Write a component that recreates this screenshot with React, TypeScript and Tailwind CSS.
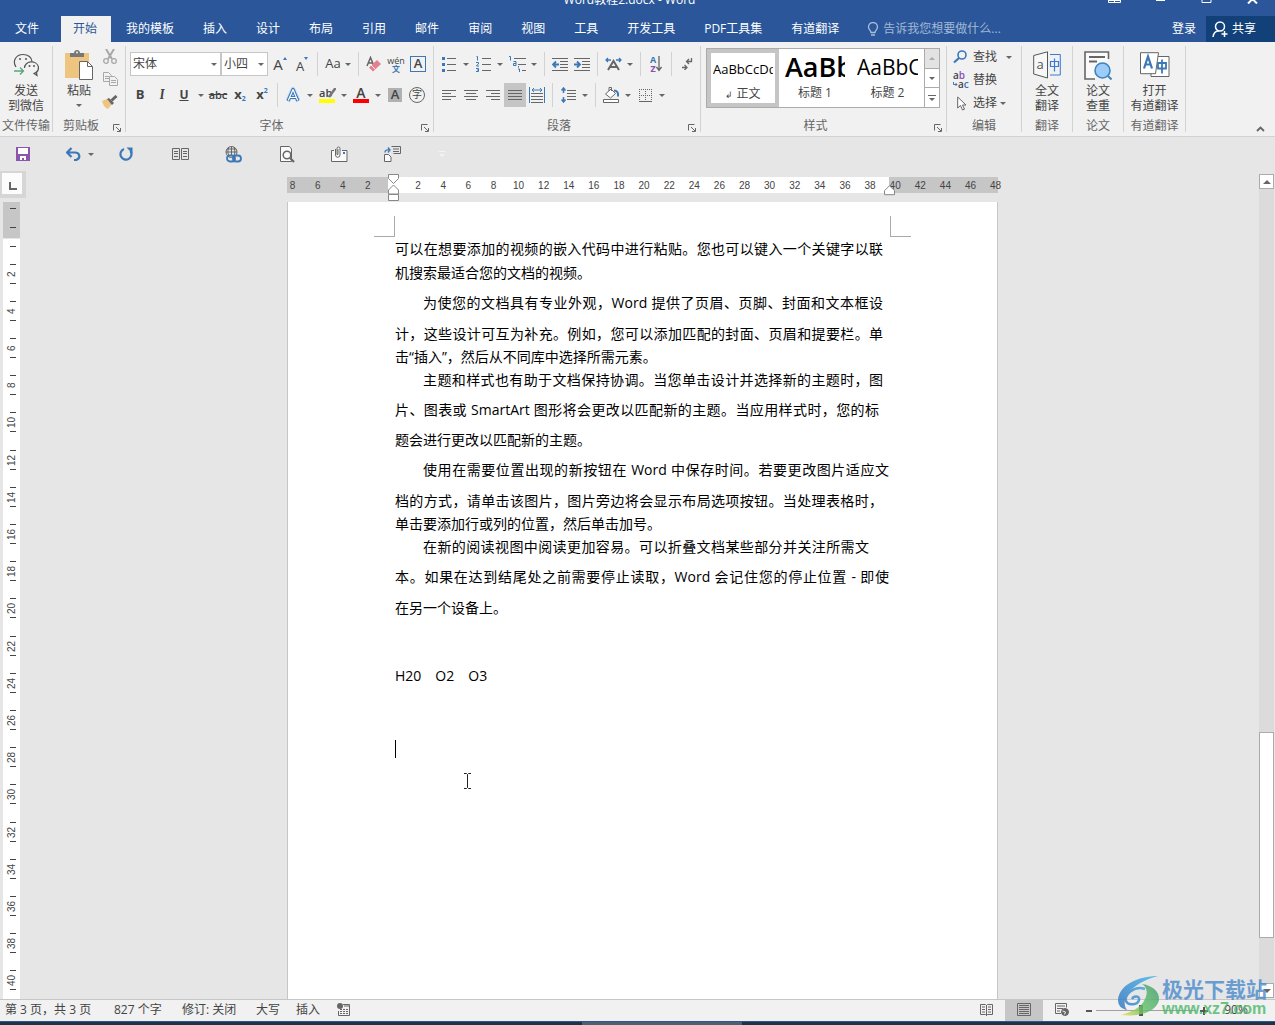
import type { ReactNode } from "react";
import { clsx } from "clsx";

const tabs = [
  "开始", "我的模板", "插入", "设计", "布局", "引用", "邮件", "审阅", "视图", "工具", "开发工具", "PDF工具集", "有道翻译",
];

const hRuler = [8, 6, 4, 2, 0, 2, 4, 6, 8, 10, 12, 14, 16, 18, 20, 22, 24, 26, 28, 30, 32, 34, 36, 38, 40, 42, 44, 46, 48];
const vRuler = [2, 4, 6, 8, 10, 12, 14, 16, 18, 20, 22, 24, 26, 28, 30, 32, 34, 36, 38, 40];

type Line = { text: string; space: string; indent?: boolean; end?: string };

// lines with an `end` are justified up to that right padding
const paragraphs: Line[][] = [
  [
    { text: "可以在想要添加的视频的嵌入代码中进行粘贴。您也可以键入一个关键字以联", space: "pt-0.5", end: "pr-1.5" },
    { text: "机搜索最适合您的文档的视频。", space: "pt-0.5" },
  ],
  [
    { text: "为使您的文档具有专业外观，Word 提供了页眉、页脚、封面和文本框设", space: "pt-2", indent: true, end: "pr-1.5" },
    { text: "计，这些设计可互为补充。例如，您可以添加匹配的封面、页眉和提要栏。单", space: "pt-[9px]", end: "pr-1.5" },
    { text: "击“插入”，然后从不同库中选择所需元素。", space: "pt-px" },
  ],
  [
    { text: "主题和样式也有助于文档保持协调。当您单击设计并选择新的主题时，图", space: "pt-px", indent: true, end: "pr-1.5" },
    { text: "片、图表或 SmartArt 图形将会更改以匹配新的主题。当应用样式时，您的标", space: "pt-2", end: "pr-2.5" },
    { text: "题会进行更改以匹配新的主题。", space: "pt-2" },
  ],
  [
    { text: "使用在需要位置出现的新按钮在 Word 中保存时间。若要更改图片适应文", space: "pt-2", indent: true, end: "pr-0" },
    { text: "档的方式，请单击该图片，图片旁边将会显示布局选项按钮。当处理表格时，", space: "pt-[9px]", end: "pr-1.5" },
    { text: "单击要添加行或列的位置，然后单击加号。", space: "pt-px" },
  ],
  [
    { text: "在新的阅读视图中阅读更加容易。可以折叠文档某些部分并关注所需文", space: "pt-px", indent: true, end: "pr-5" },
    { text: "本。如果在达到结尾处之前需要停止读取，Word 会记住您的停止位置 - 即使", space: "pt-2", end: "pr-0" },
    { text: "在另一个设备上。", space: "pt-[9px]" },
  ],
];

function Icon({ w, h, children }: { w: number; h: number; children: ReactNode }) {
  return (
    <svg width={w} height={h} viewBox={`0 0 ${w} ${h}`} fill="none" stroke="#666" aria-hidden="true" className="shrink-0">
      {children}
    </svg>
  );
}

function Caret({ color = "#666" }: { color?: string }) {
  return (
    <Icon w={6} h={3}>
      <path d="M0 0h6L3 3z" fill={color} stroke="none" />
    </Icon>
  );
}

function Tool({ label, active, children }: { label: string; active?: boolean; children: ReactNode }) {
  return (
    <button
      type="button"
      aria-label={label}
      className={clsx("flex h-6 w-[22px] shrink-0 items-center justify-center", active && "bg-[#c5c5c5]")}
    >
      {children}
    </button>
  );
}

function More({ label }: { label: string }) {
  return (
    <button type="button" aria-label={label} className="flex h-6 w-3 shrink-0 items-center justify-center">
      <Caret />
    </button>
  );
}

function Sep() {
  return <span className="mx-1 h-6 w-px shrink-0 bg-[#d2d2d2]" />;
}

function Group({ label, width, launcher, children }: { label: string; width: string; launcher?: boolean; children: ReactNode }) {
  return (
    <section className={clsx("my-1 flex shrink-0 flex-col border-r border-[#d2d2d2]", width)}>
      <div className="flex-1">{children}</div>
      <div className="flex h-3 items-center leading-3 text-[#666]">
        <span className="flex-1 text-center whitespace-nowrap">{label}</span>
        {launcher && (
          <button type="button" aria-label={`${label}设置`} className="mt-1 flex w-4 justify-center">
            <Icon w={8} h={8}>
              <path d="M.5 6.500V.5h6M3 3l4 4M7.500 4v3.500H4" />
            </Icon>
          </button>
        )}
      </div>
    </section>
  );
}

function BigButton({ icon, lines }: { icon: ReactNode; lines: string[] }) {
  return (
    <button type="button" className="flex w-full flex-col items-center pt-1 leading-[15px] whitespace-nowrap">
      <span className="flex h-[30px] items-center">{icon}</span>
      <span className="mt-[3px]">{lines[0]}</span>
      <span>{lines[1]}</span>
    </button>
  );
}

function TitleBar() {
  return (
    <div className="flex h-4 items-start overflow-hidden text-white">
      <div className="flex-1" />
      <div className="-mt-2 leading-4">Word教程2.docx - Word</div>
      <div className="flex flex-1 justify-end gap-[33px] pr-4">
        <button type="button" aria-label="功能区显示选项">
          <Icon w={13} h={4}>
            <path d="M.5 0v2.500h12V0M6.500 0v3M0 .5h13" stroke="#fff" />
          </Icon>
        </button>
        <button type="button" aria-label="最小化">
          <Icon w={13} h={4}>
            <path d="M2 .5h9" stroke="#fff" />
          </Icon>
        </button>
        <button type="button" aria-label="最大化">
          <Icon w={13} h={4}>
            <path d="M2 0v2.500h9V0" stroke="#fff" />
          </Icon>
        </button>
        <button type="button" aria-label="关闭">
          <Icon w={13} h={4}>
            <path d="M6.500-1 2 3.500M6.500-1 11 3.500" stroke="#fff" strokeWidth="2" />
          </Icon>
        </button>
      </div>
    </div>
  );
}

function TabBar() {
  return (
    <nav className="flex h-[26px] items-stretch text-white">
      <button type="button" className="mr-2 ml-[3px] pr-3.5 pl-3">文件</button>
      <div className="flex gap-[3px]">
        {tabs.map((tab) => (
          <button
            key={tab}
            type="button"
            className={clsx("pr-3.5 pl-3 whitespace-nowrap", tab === "开始" && "bg-[#f1f1f1] text-[#2b579a]")}
          >
            {tab}
          </button>
        ))}
      </div>
      <label className="ml-3.5 flex flex-1 items-center gap-1">
        <Icon w={12} h={14}>
          <path d="M4 10.500C4 8.500 1.500 7.500 1.500 5a4.500 4.500 0 0 1 9 0c0 2.500-2.500 3.500-2.500 5.500zM4 13h4" stroke="#a9bcd8" strokeWidth="1.300" />
        </Icon>
        <input
          type="text"
          aria-label="告诉我您想要做什么"
          placeholder="告诉我您想要做什么..."
          className="w-32 bg-transparent outline-none placeholder:text-[#a3b8d6]"
        />
      </label>
      <button type="button" className="px-2.5">登录</button>
      <button type="button" className="flex w-[69px] items-center gap-1 bg-[#124078] pl-1.5">
        <Icon w={16} h={17}>
          <circle cx="8" cy="5.500" r="4.500" stroke="#fff" strokeWidth="1.500" />
          <path d="M1 16c.5-4 2.500-6 6-6.200M12.500 10v6M9.500 13h6" stroke="#fff" strokeWidth="1.500" />
        </Icon>
        共享
      </button>
    </nav>
  );
}

function ClipboardGroup() {
  return (
    <Group label="剪贴板" width="w-[73px]" launcher>
      <div className="flex pl-1.5">
        <button type="button" className="flex w-10 flex-col items-center pt-1 leading-[15px]">
          <Icon w={28} h={30}>
            <path d="M0 3h24v25H0z" fill="#eec57e" stroke="none" />
            <path d="M5 3h4c0-4 6-4 6 0h4v4H5z" fill="#777" stroke="none" />
            <circle cx="12" cy="2.500" r="1" fill="#f1f1f1" stroke="none" />
            <path d="M14.500 11.500h8l5 5v13h-13z" fill="#fff" />
            <path d="M22.500 11.500v5h5" />
          </Icon>
          <span className="mt-[3px]">粘贴</span>
          <span className="mt-1.5"><Caret /></span>
        </button>
        <div className="flex flex-col gap-[3px] pl-0.5">
          <button type="button" aria-label="剪切" className="flex h-5 w-[18px] items-center justify-center">
            <Icon w={14} h={15}>
              <path d="M3 0l6 10M11 0L5 10" stroke="#a8a8a8" strokeWidth="2" />
              <circle cx="3" cy="12" r="2.300" stroke="#a8a8a8" strokeWidth="1.300" />
              <circle cx="11" cy="12" r="2.300" stroke="#a8a8a8" strokeWidth="1.300" />
            </Icon>
          </button>
          <button type="button" aria-label="复制" className="flex h-5 w-[18px] items-center justify-center">
            <Icon w={15} h={14}>
              <path d="M.5.500h5l3 3v6h-8zM2 4.500h4M2 6.500h4" stroke="#a8a8a8" />
              <path d="M6.500 4.500h5l3 3v6h-8z" fill="#f1f1f1" stroke="#a8a8a8" />
              <path d="M8 8.500h5M8 10.500h5" stroke="#a8a8a8" />
            </Icon>
          </button>
          <button type="button" aria-label="格式刷" className="flex h-5 w-[18px] items-center justify-center">
            <Icon w={16} h={14}>
              <path d="M0 6l5-2 5 5-4 5c-3-1-5-4-6-8z" fill="#eec57e" stroke="none" />
              <path d="M5 4l2-1 5 5-2 2z" fill="#666" stroke="none" />
              <path d="M9.500 5.500L14.500 1" strokeWidth="3" />
            </Icon>
          </button>
        </div>
      </div>
    </Group>
  );
}

function FontGroup() {
  return (
    <Group label="字体" width="w-[308px]" launcher>
      <div className="flex flex-col gap-[7px] pt-1.5">
        <div className="flex items-center pl-1">
          <div className="grid w-[91px] shrink-0 items-center">
            <select aria-label="字体" className="col-start-1 row-start-1 h-6 appearance-none border border-[#c6c6c6] bg-white pl-0.5">
              <option>宋体</option>
            </select>
            <span className="pointer-events-none col-start-1 row-start-1 mr-1 justify-self-end"><Caret /></span>
          </div>
          <div className="mr-px grid w-[47px] shrink-0 items-center">
            <select aria-label="字号" className="col-start-1 row-start-1 h-6 appearance-none border border-[#c6c6c6] bg-white pl-0.5">
              <option>小四</option>
            </select>
            <span className="pointer-events-none col-start-1 row-start-1 mr-1 justify-self-end"><Caret /></span>
          </div>
          <Tool label="增大字号">
            <span className="text-[15px] leading-none">A</span>
            <span className="mb-3"><Icon w={4} h={3}><path d="M0 3h4L2 0z" fill="#3b78b5" stroke="none" /></Icon></span>
          </Tool>
          <Tool label="减小字号">
            <span className="mt-1 text-[13px] leading-none">A</span>
            <span className="mb-3"><Icon w={4} h={3}><path d="M0 0h4L2 3z" fill="#3b78b5" stroke="none" /></Icon></span>
          </Tool>
          <Sep />
          <button type="button" aria-label="更改大小写" className="flex h-6 w-8 items-center justify-center gap-1 text-[13px]">
            Aa <Caret />
          </button>
          <Sep />
          <Tool label="清除格式">
            <Icon w={16} h={16}>
              <path d="M1 10L4.500 1.500L8 10M2.500 7h4" strokeWidth="1.500" />
              <path d="M3 11.500L11 4l4 4-8 7.500z" fill="#e2808c" stroke="none" />
              <path d="M5 9l4.500 4.500" stroke="#f1f1f1" />
            </Icon>
          </Tool>
          <Tool label="拼音指南">
            <span className="flex flex-col items-center leading-none">
              <span className="text-[9px]">wén</span>
              <span className="text-[8px] font-bold text-[#3b78b5]">文</span>
            </span>
          </Tool>
          <Tool label="字符边框">
            <span className="flex h-4 w-4 items-center justify-center border border-[#3b78b5] text-[13px] font-semibold">A</span>
          </Tool>
        </div>
        <div className="flex items-center pl-[3px]">
          <Tool label="加粗"><span className="text-[13px] font-bold">B</span></Tool>
          <Tool label="倾斜"><span className="font-serif text-[13px] font-bold italic">I</span></Tool>
          <Tool label="下划线"><span className="text-[12px] font-bold underline">U</span></Tool>
          <More label="下划线样式" />
          <Tool label="删除线"><span className="text-[11px] font-semibold line-through">abc</span></Tool>
          <Tool label="下标">
            <span className="text-[13px] font-bold">x</span>
            <span className="mt-2 text-[7px] font-bold text-[#3b78b5]">2</span>
          </Tool>
          <Tool label="上标">
            <span className="text-[13px] font-bold">x</span>
            <span className="mb-2 text-[7px] font-bold text-[#3b78b5]">2</span>
          </Tool>
          <Sep />
          <Tool label="文本效果">
            <Icon w={16} h={16}>
              <path d="M3 13.500L8 2.500l5 11M5 10h6" stroke="#c3dcf3" strokeWidth="5" strokeLinejoin="round" />
              <path d="M3 14L8 2.500 13 14M5 10.500h6" stroke="#3b78b5" strokeWidth="3.200" strokeLinejoin="round" />
              <path d="M3.300 13.500L8 2.500l4.700 11M5 10.500h6" stroke="#fff" strokeWidth="1.200" strokeLinejoin="round" />
            </Icon>
          </Tool>
          <More label="文本效果选项" />
          <Tool label="突出显示">
            <span className="flex w-4 flex-col">
              <span className="flex h-3 items-center text-[11px] font-semibold">
                ab
                <span className="-ml-1"><Icon w={8} h={11}><path d="M7.500 0L1 9" strokeWidth="2.500" stroke="#777" /></Icon></span>
              </span>
              <span className="h-1 w-4 bg-[#ffff00]" />
            </span>
          </Tool>
          <More label="突出显示颜色" />
          <Tool label="字体颜色">
            <span className="flex w-4 flex-col items-center">
              <span className="h-3 text-[14px] leading-3 font-semibold">A</span>
              <span className="h-1 w-4 bg-[#ff0000]" />
            </span>
          </Tool>
          <More label="更多颜色" />
          <Tool label="字符底纹">
            <span className="flex h-3.5 w-3.5 items-center justify-center bg-[#b1b1b1] text-[13px] font-semibold">A</span>
          </Tool>
          <Tool label="带圈字符">
            <span className="flex h-4 w-4 items-center justify-center rounded-full border border-[#666] text-[10px]">字</span>
          </Tool>
        </div>
      </div>
    </Group>
  );
}

function ParagraphGroup() {
  return (
    <Group label="段落" width="w-[267px]" launcher>
      <div className="flex flex-col gap-[7px] pt-1.5">
        <div className="flex items-center pl-1">
          <Tool label="项目符号">
            <Icon w={14} h={16}>
              <path d="M5 2.500h9M5 8.500h9M5 14.500h9" />
              <path d="M0 1h3v3H0zM0 7h3v3H0zM0 13h3v3H0z" fill="#3b78b5" stroke="none" />
            </Icon>
          </Tool>
          <More label="项目符号库" />
          <Tool label="编号">
            <Icon w={15} h={16}>
              <path d="M6 2.500h9M6 8.500h9M6 14.500h9" />
              <path d="M.5.500h1v4M0 6.500h2.500v1.500L.5 9.500v.5h2.500M0 12.500h2.500v3H0M1 14h1.500" stroke="#3b78b5" />
            </Icon>
          </Tool>
          <More label="编号库" />
          <Tool label="多级列表">
            <Icon w={17} h={16}>
              <path d="M5 2.500h12M9 8.500h8M13 14.500h4" />
              <path d="M0 .5h1.500v4M4.500 5.500H7V9.500H4.500V7.500H7M9.500 10v1.500M9 13h1.500v3" stroke="#3b78b5" />
            </Icon>
          </Tool>
          <More label="列表库" />
          <Sep />
          <Tool label="减少缩进量">
            <Icon w={16} h={13}>
              <path d="M0 .5h16M8 3.500h8M8 6.500h8M8 9.500h8M0 12.500h16" />
              <path d="M1 6.500h6M4 3.500l-3 3 3 3" stroke="#3b78b5" strokeWidth="1.800" />
            </Icon>
          </Tool>
          <Tool label="增加缩进量">
            <Icon w={16} h={13}>
              <path d="M0 .5h16M8 3.500h8M8 6.500h8M8 9.500h8M0 12.500h16" />
              <path d="M0 6.500h6M3 3.500l3 3-3 3" stroke="#3b78b5" strokeWidth="1.800" />
            </Icon>
          </Tool>
          <Sep />
          <Tool label="中文版式">
            <Icon w={17} h={14}>
              <path d="M3 13l5.500-9L14 13M5.500 10h6" strokeWidth="2" />
              <path d="M1 3h5M3 1L1 3l2 2M16 3h-5M14 1l2 2-2 2" stroke="#3b78b5" strokeWidth="1.300" />
            </Icon>
          </Tool>
          <More label="中文版式选项" />
          <Sep />
          <Tool label="排序">
            <span className="flex flex-col text-[9px] leading-[9px] font-bold">
              <span className="text-[#3b78b5]">A</span>
              <span className="text-[#8c4fb0]">Z</span>
            </span>
            <Icon w={6} h={16}><path d="M3 0v14M.5 11L3 14.500 5.500 11" strokeWidth="1.300" /></Icon>
          </Tool>
          <Sep />
          <Tool label="显示编辑标记">
            <Icon w={11} h={12}>
              <path d="M9.500 0v3.500H5M7 1L4.500 3.500 7 6M0 9.500h4.500M2.500 7L5 9.500 2.500 12" strokeWidth="1.300" />
            </Icon>
          </Tool>
        </div>
        <div className="flex items-center pl-1">
          <Tool label="左对齐"><Icon w={14} h={10}><path d="M0 .5h14M0 3.500h9M0 6.500h14M0 9.500h9" /></Icon></Tool>
          <Tool label="居中"><Icon w={14} h={10}><path d="M0 .5h14M2 3.500h10M0 6.500h14M2 9.500h10" /></Icon></Tool>
          <Tool label="右对齐"><Icon w={14} h={10}><path d="M0 .5h14M5 3.500h9M0 6.500h14M5 9.500h9" /></Icon></Tool>
          <Tool label="两端对齐" active><Icon w={14} h={10}><path d="M0 .5h14M0 3.500h14M0 6.500h14M0 9.500h14" /></Icon></Tool>
          <Tool label="分散对齐">
            <Icon w={16} h={16}>
              <path d="M2 6.500h12M2 9.500h12M2 12.500h12M2 15.500h12" />
              <path d="M.5 0v16M15.500 0v16M3 3h10M5 1L3 3l2 2M11 1l2 2-2 2" stroke="#3b78b5" />
            </Icon>
          </Tool>
          <Sep />
          <Tool label="行距">
            <Icon w={15} h={16}>
              <path d="M6 3.500h9M6 6.500h9M6 9.500h9M6 12.500h9" />
              <path d="M2.500 1v5M2.500 10v5M.5 3.500l2-2.500 2 2.500M.5 12.500l2 2.500 2-2.500" stroke="#3b78b5" strokeWidth="1.500" />
            </Icon>
          </Tool>
          <More label="行距选项" />
          <Sep />
          <Tool label="底纹">
            <Icon w={16} h={16}>
              <path d="M2.500 7L8 2l4.500 4.500L7.500 11zM6 4V.5h2.500V4" fill="#fff" />
              <path d="M11 3.500c3 0 4.500 2 4 6" stroke="#3b78b5" strokeWidth="2" />
              <path d="M.5 12.500h15v3H.5z" fill="#fff" />
            </Icon>
          </Tool>
          <More label="底纹颜色" />
          <Tool label="边框">
            <Icon w={13} h={13}>
              <path d="M0 .5h13M0 6.500h13M.5 0v13M6.500 0v13M12.500 0v13" strokeDasharray="1 1" />
              <path d="M0 12.500h13" />
            </Icon>
          </Tool>
          <More label="边框选项" />
        </div>
      </div>
    </Group>
  );
}

function StyleGroup() {
  return (
    <Group label="样式" width="w-[246px]" launcher>
      <div className="mt-0.5 mr-1.5 ml-[5px] flex h-[60px] border border-[#ababab] bg-white text-black">
        <button type="button" className="flex w-[72px] flex-col border-4 border-[#c5c5c5] px-0.5">
          <span className="flex h-[34px] w-full items-center overflow-hidden text-[13px] whitespace-nowrap">AaBbCcDd</span>
          <span className="w-full text-center leading-[14px] text-[#444]"><span className="text-[9px]">↲</span> 正文</span>
        </button>
        <button type="button" className="flex w-[72px] flex-col px-1.5">
          <span className="flex h-9 w-full items-center overflow-hidden text-[27px] font-semibold whitespace-nowrap">AaBb</span>
          <span className="w-full text-center leading-4 text-[#444]">标题 1</span>
        </button>
        <button type="button" className="flex w-[73px] flex-col px-1.5">
          <span className="flex h-9 w-full items-center overflow-hidden text-[21px] whitespace-nowrap">AaBbC</span>
          <span className="w-full text-center leading-4 text-[#444]">标题 2</span>
        </button>
        <div className="flex flex-1 flex-col border-l border-[#ababab]">
          <button type="button" aria-label="上一行" className="flex flex-1 items-center justify-center border-b border-[#ababab] bg-[#e3e3e3]">
            <Icon w={6} h={3}><path d="M0 3h6L3 0z" fill="#ababab" stroke="none" /></Icon>
          </button>
          <button type="button" aria-label="下一行" className="flex flex-1 items-center justify-center border-b border-[#ababab]"><Caret /></button>
          <button type="button" aria-label="其他样式" className="flex flex-1 items-center justify-center">
            <Icon w={8} h={6}><path d="M0 .5h8" /><path d="M1 3h6L4 6z" fill="#666" stroke="none" /></Icon>
          </button>
        </div>
      </div>
    </Group>
  );
}

function EditGroup() {
  return (
    <Group label="编辑" width="w-[75px]">
      <div className="flex flex-col gap-[3px] pt-px pl-1.5">
        <button type="button" className="flex h-5 items-center">
          <span className="flex w-5"><Icon w={14} h={14}>
            <circle cx="9" cy="5" r="4" stroke="#3b78b5" strokeWidth="1.600" />
            <path d="M6 8L1 12.500" stroke="#3b78b5" strokeWidth="2.200" />
          </Icon></span>
          查找<span className="ml-[9px]"><Caret /></span>
        </button>
        <button type="button" className="flex h-5 items-center">
          <span className="flex w-5 flex-col text-left text-[10px] leading-[9px] font-semibold">
            <span>a<span className="text-[#8c4fb0]">b</span></span>
            <span className="flex items-center">
              <Icon w={5} h={5}><path d="M.5 0v2.500H4M2.500 1L4 2.500 2.500 4" stroke="#3b78b5" /></Icon>
              a<span className="text-[#3b78b5]">c</span>
            </span>
          </span>
          替换
        </button>
        <button type="button" className="flex h-5 items-center">
          <span className="flex w-5 pl-1"><Icon w={10} h={15}>
            <path d="M.7 1v11l2.800-2.500L5.500 14l2-.8L5.500 9H9z" fill="#fff" />
          </Icon></span>
          选择<span className="ml-[3px]"><Caret /></span>
        </button>
      </div>
    </Group>
  );
}

function Ribbon() {
  return (
    <div className="flex h-[95px] border-b border-[#d2d2d2] bg-[#f1f1f1]">
      <Group label="文件传输" width="w-[53px]">
        <BigButton
          lines={["发送", "到微信"]}
          icon={
            <Icon w={26} h={24}>
              <path d="M3 14C-1 8 3 1.500 10 1.500c5 0 9 3 9 7" stroke="#555" strokeWidth="1.200" />
              <path d="M11.500 15a7 6 0 1 1 9.500 5.500l3 2-.5-3c1.500-1.200 2-3 1.800-5" stroke="#555" strokeWidth="1.200" />
              <circle cx="7" cy="6" r="1" fill="#555" stroke="none" />
              <circle cx="13" cy="6" r="1" fill="#555" stroke="none" />
              <circle cx="16.500" cy="13" r="1" fill="#555" stroke="none" />
              <circle cx="21" cy="13" r="1" fill="#555" stroke="none" />
              <path d="M1 18h9M7 14.500l3.500 3.500L7 21.500" stroke="#54a878" strokeWidth="1.300" />
            </Icon>
          }
        />
      </Group>
      <ClipboardGroup />
      <FontGroup />
      <ParagraphGroup />
      <StyleGroup />
      <EditGroup />
      <Group label="翻译" width="w-[51px]">
        <BigButton
          lines={["全文", "翻译"]}
          icon={
            <Icon w={28} h={28}>
              <path d="M14.500.800L.7 4.500v18.500l13.800 4z" fill="#f7f7f7" stroke="#555" />
              <text x="3.500" y="18" fontSize="13" fill="#555" stroke="none">a</text>
              <path d="M17 3.500h10.300v20.500H17" stroke="#3c78d8" />
              <path d="M17.500 10.500h8v5h-8zM21.500 7.500v13" stroke="#3c78d8" strokeWidth="1.200" />
            </Icon>
          }
        />
      </Group>
      <Group label="论文" width="w-[51px]">
        <BigButton
          lines={["论文", "查重"]}
          icon={
            <Icon w={28} h={29}>
              <path d="M24.500 8V1H1v27h10" fill="#fafafa" stroke="#666" strokeWidth="1.600" />
              <path d="M5 6h16M5 10.500h8" strokeWidth="1.800" />
              <circle cx="18.500" cy="19.500" r="7.500" fill="#9dccfa" stroke="#3b85bd" strokeWidth="1.600" />
              <path d="M24 25l3.500 3.500" stroke="#3b85bd" strokeWidth="2" />
            </Icon>
          }
        />
      </Group>
      <Group label="有道翻译" width="w-[62px]">
        <BigButton
          lines={["打开", "有道翻译"]}
          icon={
            <Icon w={30} h={26}>
              <path d="M11 4.500h18v20H11z" fill="#fff" />
              <path d="M.5.700h18l-3 21H.5z" fill="#fff" />
              <path d="M4 16.500L8 4.500l4 12M5.500 12.500h5" stroke="#3b78b5" strokeWidth="2.200" />
              <path d="M18 11h8v5.500h-8zM22 7.500v14" stroke="#3b78b5" strokeWidth="1.800" />
            </Icon>
          }
        />
      </Group>
      <div className="flex flex-1 items-end justify-end pr-2.5 pb-1">
        <button type="button" aria-label="折叠功能区">
          <Icon w={9} h={6}><path d="M1 5l3.500-3.500L8 5" strokeWidth="1.800" /></Icon>
        </button>
      </div>
    </div>
  );
}

function QuickAccess() {
  return (
    <div className="flex h-[34px] items-center pl-4">
      <button type="button" aria-label="保存" className="mr-9">
        <Icon w={14} h={14}>
          <path d="M0 0h14v14H0z" fill="#8c55ae" stroke="none" />
          <path d="M2 1h10v6H2zM4 9h6v4H8v-2H6v2H4z" fill="#fff" stroke="none" />
        </Icon>
      </button>
      <button type="button" aria-label="撤消" className="mr-[7px]">
        <Icon w={15} h={14}>
          <path d="M1 5.500h8c5 0 6 6 1 7.500H8M5.500 1L1 5.500 5.500 10" stroke="#3b78b5" strokeWidth="2.200" />
        </Icon>
      </button>
      <button type="button" aria-label="撤消列表" className="mr-[25px]"><Caret /></button>
      <button type="button" aria-label="重复" className="mr-[39px]">
        <Icon w={14} h={14}>
          <path d="M5 2A5.500 5.500 0 1 0 11.500 4" stroke="#3b78b5" strokeWidth="2.200" />
          <path d="M7.500.500H13.500V6.500z" fill="#3b78b5" stroke="none" />
        </Icon>
      </button>
      <button type="button" aria-label="并排查看" className="mr-9">
        <Icon w={17} h={12}>
          <path d="M.5.500h7v11h-7zM9.500.500h7v11h-7zM2 3.500h4M2 5.500h4M2 8.500h4M11 3.500h4M11 5.500h4M11 8.500h4" />
        </Icon>
      </button>
      <button type="button" aria-label="超链接" className="mr-[38px]">
        <Icon w={17} h={17}>
          <circle cx="6.500" cy="6" r="5.500" />
          <path d="M1 6h11M6.500.500v9M2 3h9M4 1c-1.500 3-1.500 6 0 9M9 1c1 3 1 5 .5 8" />
          <rect x="2" y="9.500" width="8" height="6" rx="3" stroke="#3b78b5" strokeWidth="1.800" />
          <rect x="8" y="9.500" width="8" height="6" rx="3" stroke="#3b78b5" strokeWidth="1.800" />
        </Icon>
      </button>
      <button type="button" aria-label="打印预览" className="mr-9">
        <Icon w={15} h={17}>
          <path d="M9.500.500h-9v15h11V3z" fill="#fafafa" />
          <circle cx="7" cy="9" r="3.800" strokeWidth="1.500" />
          <path d="M10 12l4 4" strokeWidth="2.200" />
        </Icon>
      </button>
      <button type="button" aria-label="附件" className="mr-9">
        <Icon w={17} h={16}>
          <path d="M3 4.500H.5v11h15.500V4.500h-5" fill="#fafafa" />
          <path d="M4.500 3v6a2 2 0 0 0 4.500 0V2.500a1.500 1.500 0 0 0-3 0V8.500h1V3" fill="#fafafa" />
          <path d="M12 6h2v2h-2z" fill="#3b78b5" stroke="none" />
        </Icon>
      </button>
      <button type="button" aria-label="切换窗口" className="mr-[38px]">
        <Icon w={17} h={16}>
          <path d="M7.500.500h9v7h-7M9 3h6M9 5.500h6" />
          <path d="M.5 8.500h4l2.500 2.500v4.500H.5z" fill="#fafafa" />
          <path d="M1 6.500C1 4.500 2.500 3.500 5 4M4 1.500L6 4 4 6.500" stroke="#3b78b5" strokeWidth="1.300" />
        </Icon>
      </button>
      <button type="button" aria-label="自定义快速访问工具栏">
        <Icon w={6} h={6}><path d="M0 .5h6" stroke="#f4f4f4" /><path d="M0 3h6L3 6z" fill="#f4f4f4" stroke="none" /></Icon>
      </button>
    </div>
  );
}

function VerticalRuler() {
  return (
    <div className="flex w-[27px] shrink-0 flex-col">
      <button type="button" aria-label="制表符" className="flex h-[27px] w-[26px] border-t-2 border-r-4 border-b-4 border-l-2 border-[#d6d6d6] bg-[#fcfcfc]">
        <span className="mt-[9px] ml-[7px] h-2 w-2 border-b-2 border-l-2 border-[#666]" />
      </button>
      <div className="mt-1 ml-[3px] flex min-h-0 w-[17px] flex-1 flex-col bg-white font-[Liberation_Sans,sans-serif] text-[10px] text-[#444]">
        <div className="flex h-9 shrink-0 flex-col items-end gap-[18px] bg-[#c6c6c6] pt-1.5 pr-1">
          <span className="h-px w-1.5 bg-[#444]" />
          <span className="h-px w-1.5 bg-[#444]" />
        </div>
        <div className="flex h-[17px] shrink-0 flex-col items-end border-t border-[#e6e6e6] pt-[7px] pr-1">
          <span className="h-px w-1.5 bg-[#444]" />
        </div>
        {vRuler.map((n) => (
          <div key={n} className="flex min-h-0 flex-1 flex-col items-end justify-center pr-1">
            <span className="h-px w-1.5 shrink-0 bg-[#444]" />
            <span className="flex h-[18px] w-2 rotate-180 items-center justify-center leading-[8px] [writing-mode:vertical-rl]">{n}</span>
            <span className="h-px w-1.5 shrink-0 bg-[#444]" />
          </div>
        ))}
      </div>
    </div>
  );
}

function HorizontalRuler() {
  return (
    <div className="relative mt-1.5 grid h-4 shrink-0 font-[Liberation_Sans,sans-serif] text-[10px] text-[#444]">
      <div className="col-start-1 row-start-1 flex">
        <span className="w-[101px] bg-[#c6c6c6]" />
        <span className="flex-1 bg-white" />
        <span className="w-[109px] bg-[#c6c6c6]" />
      </div>
      <div className="col-start-1 row-start-1 -mr-2.5 -ml-[7px] flex items-center pt-0.5">
        {hRuler.map((n, i) => (
          <span key={i} className="flex-1 text-center">{n > 0 && n}</span>
        ))}
      </div>
      <div className="absolute -top-1 left-[101px]">
        <Icon w={11} h={29}>
          <path d="M.5 1.500h10v4l-5 5-5-5zM5.500 12l5 5v4H.5v-4zM.5 21.500h10v6H.5z" fill="#fff" stroke="#888" />
        </Icon>
      </div>
      <div className="absolute top-2 right-[103px]">
        <Icon w={11} h={11}>
          <path d="M5.500.700l5 5v4H.5v-4z" fill="#fff" stroke="#888" />
        </Icon>
      </div>
    </div>
  );
}

function Page() {
  return (
    <article className="relative mt-[9px] flex-1 border-x border-[#c6c6c6] bg-white pt-3.5 text-sm text-black">
      <div className="flex h-5 justify-between px-[86px]">
        <span className="h-[21px] w-[21px] border-r border-b border-[#aaa]" />
        <span className="h-[21px] w-[21px] border-b border-l border-[#aaa]" />
      </div>
      <div className="mr-[108px] ml-[107px] leading-[22px] whitespace-nowrap">
        {paragraphs.map((lines, i) => (
          <p key={i}>
            {lines.map((line) => (
              <span
                key={line.text}
                className={clsx("block", line.space, line.indent && "pl-7", line.end, line.end && "[text-align-last:justify]")}
              >
                {line.text}
              </span>
            ))}
          </p>
        ))}
        <p className="mt-[46px] flex gap-3.5">
          <span>H20</span>
          <span>O2</span>
          <span>O3</span>
        </p>
        <div className="mt-[53px] h-[18px] w-px bg-black" />
      </div>
      <div className="absolute top-[571px] left-[176px]">
        <Icon w={7} h={16}>
          <path d="M0 .5h2.500l1 1 1-1H7M3.500 1.500v13M0 15.500h2.500l1-1 1 1H7" stroke="#222" />
        </Icon>
      </div>
    </article>
  );
}

function ScrollBar() {
  return (
    <div className="mx-px mt-[3px] mb-px flex w-[15px] shrink-0 flex-col bg-[#dbdbdb]">
      <button type="button" aria-label="向上滚动" className="flex h-[15px] shrink-0 items-center justify-center border border-[#ababab] bg-white">
        <Icon w={8} h={4}><path d="M0 4h8L4 0z" fill="#666" stroke="none" /></Icon>
      </button>
      <div className="flex-[544]" />
      <div className="flex-[205] border border-[#ababab] bg-white" />
      <div className="flex-[45]" />
      <button type="button" aria-label="向下滚动" className="flex h-[15px] shrink-0 items-center justify-center border border-[#ababab] bg-white">
        <Icon w={8} h={4}><path d="M0 0h8L4 4z" fill="#666" stroke="none" /></Icon>
      </button>
    </div>
  );
}

function StatusBar() {
  return (
    <footer className="flex h-[22px] shrink-0 items-stretch border-t border-[#c6c6c6] bg-[#f1f1f1] pl-[5px] whitespace-nowrap">
      <div className="flex flex-1 items-center pb-0.5">
        <span className="w-[109px]">第 3 页，共 3 页</span>
        <span className="w-[68px]">827 个字</span>
        <span className="w-[74px]">修订: 关闭</span>
        <span className="w-10">大写</span>
        <span className="w-[41px]">插入</span>
        <Icon w={13} h={13}>
          <path d="M6 1.500h6.500v11H1.500V8M7 3h5" />
          <circle cx="3" cy="3" r="3" fill="#666" stroke="none" />
          <path d="M3 6.500h8M3 8.500h8M3 10.500h8" strokeDasharray="2 1" />
        </Icon>
      </div>
      <button type="button" aria-label="阅读视图" className="flex w-[38px] items-center justify-center pb-0.5">
        <Icon w={13} h={13}>
          <path d="M.5 1.500h5l1 1 1-1h5v10h-5l-1 1-1-1h-5zM6.500 2v11M2 4h3M2 6.500h3M2 9h3M8 4h3M8 6.500h3M8 9h3" />
        </Icon>
      </button>
      <button type="button" aria-label="页面视图" className="flex w-[38px] items-center justify-center bg-[#c6c6c6] pb-0.5">
        <Icon w={14} h={13}>
          <path d="M.5.500h13v12H.5zM2 2.500h10M2 4.500h10M2 6.500h10M2 8.500h10M2 10.500h10" />
        </Icon>
      </button>
      <button type="button" aria-label="Web 版式视图" className="flex w-[38px] items-center justify-center pb-0.5">
        <Icon w={14} h={13}>
          <path d="M6 10.500H.5V.5h11v4M2 3h8M2 5.500h6M2 8h3" />
          <circle cx="10" cy="9" r="3.500" fill="#666" />
          <path d="M7.500 8l3 1-1 2.500" stroke="#f1f1f1" />
        </Icon>
      </button>
      <button type="button" aria-label="缩小" className="ml-[5px] flex w-[6px] items-center">
        <Icon w={6} h={2}><path d="M0 1h6" strokeWidth="2" stroke="#555" /></Icon>
      </button>
      <input
        type="range"
        aria-label="缩放"
        min={0}
        max={100}
        defaultValue={45}
        className="mx-1 w-[100px] appearance-none bg-transparent [&::-webkit-slider-runnable-track]:h-px [&::-webkit-slider-runnable-track]:bg-[#a0a0a0] [&::-webkit-slider-thumb]:-mt-[5px] [&::-webkit-slider-thumb]:h-[11px] [&::-webkit-slider-thumb]:w-1 [&::-webkit-slider-thumb]:appearance-none [&::-webkit-slider-thumb]:bg-[#555]"
      />
      <button type="button" aria-label="放大" className="flex w-2 items-center">
        <Icon w={8} h={8}><path d="M0 4h8M4 0v8" strokeWidth="2" stroke="#555" /></Icon>
      </button>
      <button type="button" className="mr-[26px] ml-[15px] w-[26px] pb-0.5">90%</button>
    </footer>
  );
}

function SiteMark() {
  return (
    <div className="pointer-events-none absolute right-2 bottom-2 flex items-end gap-0.5 opacity-80">
      <svg width="42" height="41" viewBox="0 0 42 41" fill="none" aria-hidden="true">
        <defs>
          <linearGradient id="leaf" x1="3" y1="40" x2="40" y2="12" gradientUnits="userSpaceOnUse">
            <stop offset="0" stopColor="#f0e04a" />
            <stop offset=".5" stopColor="#5fbf6a" />
            <stop offset="1" stopColor="#3fa06a" />
          </linearGradient>
          <linearGradient id="wave" x1="38" y1="0" x2="4" y2="32" gradientUnits="userSpaceOnUse">
            <stop offset="0" stopColor="#3fb4ea" />
            <stop offset="1" stopColor="#2f76c2" />
          </linearGradient>
        </defs>
        <path d="M40 0C20 0 1 9 0 24c0 6 4 9 9 10C2 24 11 8 40 0z" fill="url(#wave)" />
        <path d="M24 8c5 3 6 9 3 15C23 32 13 36 3 39c16 2 35-2 38-15 1-9-8-15-17-16z" fill="url(#leaf)" />
        <path d="M27 13C16 9 6 19 8 25c2 5 12 4 13-1 1-4-5-5-7-1" stroke="url(#wave)" strokeWidth="2.500" />
      </svg>
      <div className="flex flex-col">
        <span className="text-[21px] leading-6 font-bold text-[#4a8ccc]">极光下载站</span>
        <span className="font-[Liberation_Sans,sans-serif] text-[16px] leading-4 font-bold text-[#4cb86a]">www.xz7.com</span>
      </div>
    </div>
  );
}

export default function App() {
  return (
    <div className="relative flex h-screen flex-col overflow-hidden bg-[#e6e6e6] font-[Open_Sans,Noto_Sans_CJK_SC,sans-serif] text-xs text-[#444]">
      <header className="shrink-0">
        <div className="bg-[#2b579a]">
          <TitleBar />
          <TabBar />
        </div>
        <Ribbon />
        <QuickAccess />
      </header>
      <main className="flex min-h-0 flex-1">
        <VerticalRuler />
        <div className="flex flex-1 justify-center overflow-hidden">
          <div className="flex w-[711px] flex-col">
            <HorizontalRuler />
            <Page />
          </div>
        </div>
        <ScrollBar />
      </main>
      <StatusBar />
      <div className="flex h-1 shrink-0 justify-center border-t border-[#2b579a] bg-[#1d3344] pl-12">
        <span className="w-40 bg-[#4d606e]" />
      </div>
      <SiteMark />
    </div>
  );
}
